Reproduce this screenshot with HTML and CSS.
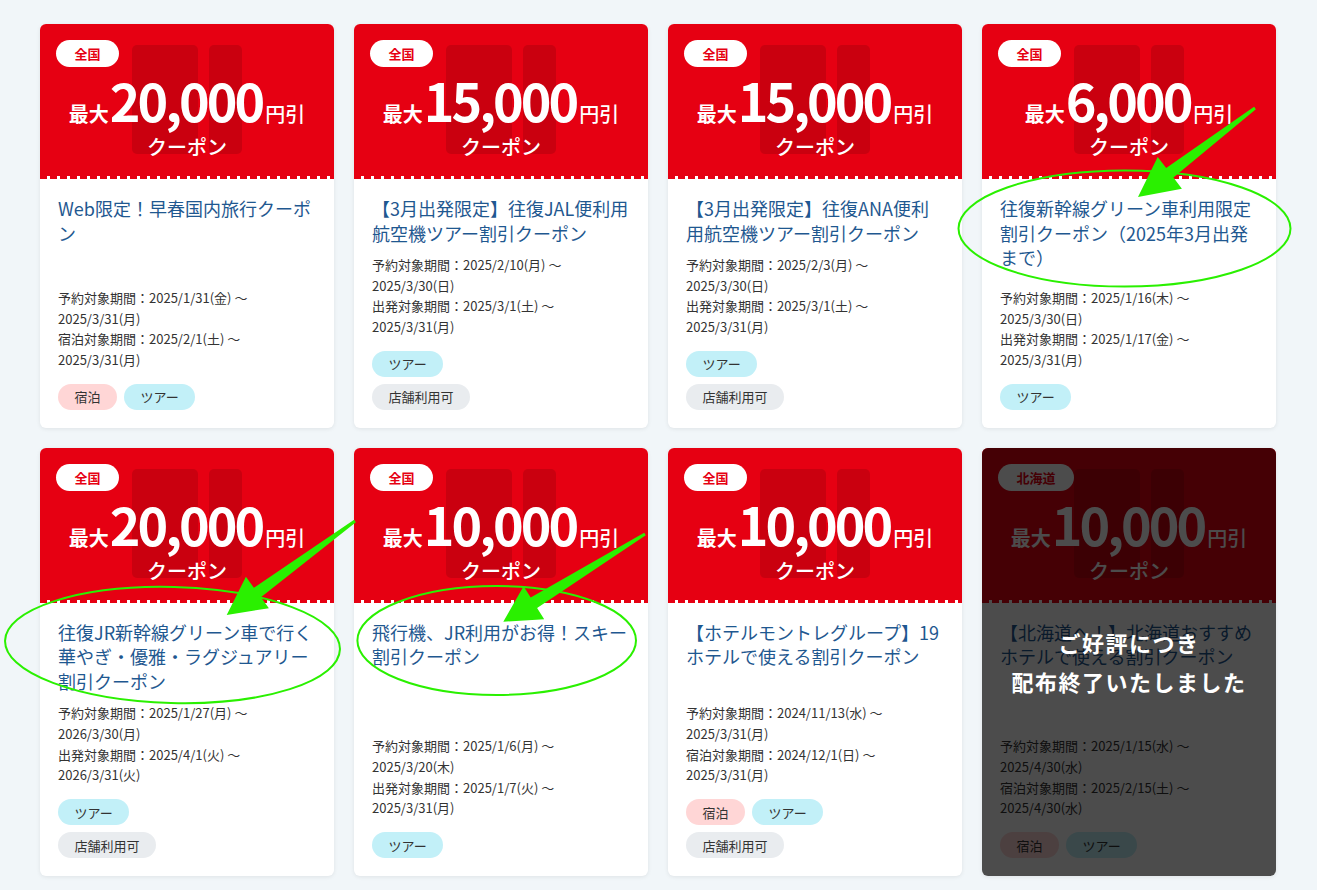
FILE: index.html
```html
<!DOCTYPE html>
<html lang="ja">
<head>
<meta charset="utf-8">
<title>クーポン一覧</title>
<link rel="stylesheet" href="styles.css">
</head>
<body>
<div class="page">
  <div class="grid">

    <div class="card">
      <div class="head">
        <svg class="deco" viewBox="0 0 110 109" width="110" height="109"><rect x="0" y="0" width="66" height="109" rx="5"/><rect x="77" y="0" width="33" height="109" rx="5"/></svg>
        <span class="badge">全国</span>
        <div class="price"><span class="pre">最大</span><span class="num">20,000</span><span class="suf">円引</span></div>
        <div class="kind">クーポン</div>
      </div>
      <div class="body">
        <h2 class="title">Web限定！早春国内旅行クーポン</h2>
        <div class="info">
          <p class="dates">予約対象期間：2025/1/31(金) ～<br>2025/3/31(月)<br>宿泊対象期間：2025/2/1(土) ～<br>2025/3/31(月)</p>
          <div class="tags"><span class="tag stay">宿泊</span><span class="tag tour">ツアー</span></div>
        </div>
      </div>
    </div>

    <div class="card">
      <div class="head">
        <svg class="deco" viewBox="0 0 110 109" width="110" height="109"><rect x="0" y="0" width="66" height="109" rx="5"/><rect x="77" y="0" width="33" height="109" rx="5"/></svg>
        <span class="badge">全国</span>
        <div class="price"><span class="pre">最大</span><span class="num">15,000</span><span class="suf">円引</span></div>
        <div class="kind">クーポン</div>
      </div>
      <div class="body">
        <h2 class="title">【3月出発限定】往復JAL便利用航空機ツアー割引クーポン</h2>
        <div class="info">
          <p class="dates">予約対象期間：2025/2/10(月) ～<br>2025/3/30(日)<br>出発対象期間：2025/3/1(土) ～<br>2025/3/31(月)</p>
          <div class="tags"><span class="tag tour">ツアー</span></div>
          <div class="tags"><span class="tag shop">店舗利用可</span></div>
        </div>
      </div>
    </div>

    <div class="card">
      <div class="head">
        <svg class="deco" viewBox="0 0 110 109" width="110" height="109"><rect x="0" y="0" width="66" height="109" rx="5"/><rect x="77" y="0" width="33" height="109" rx="5"/></svg>
        <span class="badge">全国</span>
        <div class="price"><span class="pre">最大</span><span class="num">15,000</span><span class="suf">円引</span></div>
        <div class="kind">クーポン</div>
      </div>
      <div class="body">
        <h2 class="title">【3月出発限定】往復ANA便利用航空機ツアー割引クーポン</h2>
        <div class="info">
          <p class="dates">予約対象期間：2025/2/3(月) ～<br>2025/3/30(日)<br>出発対象期間：2025/3/1(土) ～<br>2025/3/31(月)</p>
          <div class="tags"><span class="tag tour">ツアー</span></div>
          <div class="tags"><span class="tag shop">店舗利用可</span></div>
        </div>
      </div>
    </div>

    <div class="card">
      <div class="head">
        <svg class="deco" viewBox="0 0 110 109" width="110" height="109"><rect x="0" y="0" width="66" height="109" rx="5"/><rect x="77" y="0" width="33" height="109" rx="5"/></svg>
        <span class="badge">全国</span>
        <div class="price"><span class="pre">最大</span><span class="num">6,000</span><span class="suf">円引</span></div>
        <div class="kind">クーポン</div>
      </div>
      <div class="body">
        <h2 class="title">往復新幹線グリーン車利用限定割引クーポン（2025年3月出発まで）</h2>
        <div class="info">
          <p class="dates">予約対象期間：2025/1/16(木) ～<br>2025/3/30(日)<br>出発対象期間：2025/1/17(金) ～<br>2025/3/31(月)</p>
          <div class="tags"><span class="tag tour">ツアー</span></div>
        </div>
      </div>
    </div>

    <div class="card">
      <div class="head">
        <svg class="deco" viewBox="0 0 110 109" width="110" height="109"><rect x="0" y="0" width="66" height="109" rx="5"/><rect x="77" y="0" width="33" height="109" rx="5"/></svg>
        <span class="badge">全国</span>
        <div class="price"><span class="pre">最大</span><span class="num">20,000</span><span class="suf">円引</span></div>
        <div class="kind">クーポン</div>
      </div>
      <div class="body">
        <h2 class="title">往復JR新幹線グリーン車で行く華やぎ・優雅・ラグジュアリー割引クーポン</h2>
        <div class="info">
          <p class="dates">予約対象期間：2025/1/27(月) ～<br>2026/3/30(月)<br>出発対象期間：2025/4/1(火) ～<br>2026/3/31(火)</p>
          <div class="tags"><span class="tag tour">ツアー</span></div>
          <div class="tags"><span class="tag shop">店舗利用可</span></div>
        </div>
      </div>
    </div>

    <div class="card">
      <div class="head">
        <svg class="deco" viewBox="0 0 110 109" width="110" height="109"><rect x="0" y="0" width="66" height="109" rx="5"/><rect x="77" y="0" width="33" height="109" rx="5"/></svg>
        <span class="badge">全国</span>
        <div class="price"><span class="pre">最大</span><span class="num">10,000</span><span class="suf">円引</span></div>
        <div class="kind">クーポン</div>
      </div>
      <div class="body">
        <h2 class="title">飛行機、JR利用がお得！スキー割引クーポン</h2>
        <div class="info">
          <p class="dates">予約対象期間：2025/1/6(月) ～<br>2025/3/20(木)<br>出発対象期間：2025/1/7(火) ～<br>2025/3/31(月)</p>
          <div class="tags"><span class="tag tour">ツアー</span></div>
        </div>
      </div>
    </div>

    <div class="card">
      <div class="head">
        <svg class="deco" viewBox="0 0 110 109" width="110" height="109"><rect x="0" y="0" width="66" height="109" rx="5"/><rect x="77" y="0" width="33" height="109" rx="5"/></svg>
        <span class="badge">全国</span>
        <div class="price"><span class="pre">最大</span><span class="num">10,000</span><span class="suf">円引</span></div>
        <div class="kind">クーポン</div>
      </div>
      <div class="body">
        <h2 class="title">【ホテルモントレグループ】19ホテルで使える割引クーポン</h2>
        <div class="info">
          <p class="dates">予約対象期間：2024/11/13(水) ～<br>2025/3/31(月)<br>宿泊対象期間：2024/12/1(日) ～<br>2025/3/31(月)</p>
          <div class="tags"><span class="tag stay">宿泊</span><span class="tag tour">ツアー</span></div>
          <div class="tags"><span class="tag shop">店舗利用可</span></div>
        </div>
      </div>
    </div>

    <div class="card">
      <div class="head">
        <svg class="deco" viewBox="0 0 110 109" width="110" height="109"><rect x="0" y="0" width="66" height="109" rx="5"/><rect x="77" y="0" width="33" height="109" rx="5"/></svg>
        <span class="badge">北海道</span>
        <div class="price"><span class="pre">最大</span><span class="num">10,000</span><span class="suf">円引</span></div>
        <div class="kind">クーポン</div>
      </div>
      <div class="body">
        <h2 class="title">【北海道へ！】北海道おすすめホテルで使える割引クーポン</h2>
        <div class="info">
          <p class="dates">予約対象期間：2025/1/15(水) ～<br>2025/4/30(水)<br>宿泊対象期間：2025/2/15(土) ～<br>2025/4/30(水)</p>
          <div class="tags"><span class="tag stay">宿泊</span><span class="tag tour">ツアー</span></div>
        </div>
      </div>
      <div class="ended">ご好評につき<br>配布終了いたしました</div>
    </div>

  </div>
</div>

<svg class="marks" width="1317" height="890" viewBox="0 0 1317 890">
  <g fill="none" stroke="#2af000" stroke-width="2">
    <ellipse cx="1124.5" cy="228.5" rx="166" ry="58"/>
    <ellipse cx="172.5" cy="645" rx="167.5" ry="58" transform="rotate(1.5 172.5 645)"/>
    <ellipse cx="496.7" cy="640.5" rx="139.3" ry="54.5"/>
  </g>
  <g fill="#2af000">
    <polygon points="1255.9,109.2 1173.4,177.6 1181.9,188.7 1138,197 1157.7,156.9 1166.2,168.0 1254.1,106.8"/>
    <polygon points="355.9,522.2 260.9,597.3 268.9,608.2 226.7,615 245.9,576.8 253.9,587.7 354.1,519.8"/>
    <polygon points="645.8,535.3 537.1,607.9 544.2,619.3 503.3,621.7 523.6,586.2 530.7,597.6 644.2,532.7"/>
  </g>
</svg>
</body>
</html>
```
FILE: styles.css
```css
* { box-sizing: border-box; }

html, body {
  margin: 0;
  padding: 0;
}

body {
  background: #f1f6f9;
  font-family: "Noto Sans CJK JP", "Noto Sans", sans-serif;
  color: #333;
  position: relative;
  min-height: 890px;
}

.page {
  padding: 24px 0 0 40px;
}

.grid {
  display: grid;
  grid-template-columns: repeat(4, 294px);
  gap: 20px;
}

.card {
  position: relative;
  display: flex;
  flex-direction: column;
  background: #fff;
  border-radius: 6px;
  overflow: hidden;
  box-shadow: 0 1px 4px rgba(0, 0, 0, 0.08);
}

.head {
  position: relative;
  height: 155px;
  flex: none;
  background: #e60012;
  padding: 16px 16px 0;
  display: flex;
  flex-direction: column;
  align-items: center;
  color: #fff;
}

.head::after {
  content: "";
  position: absolute;
  left: 0;
  right: 0;
  bottom: 0;
  height: 3px;
  background: repeating-linear-gradient(90deg, #e60012 0 7px, #fff 7px 10px);
}

.deco {
  position: absolute;
  left: 92px;
  top: 21px;
  fill: rgba(0, 0, 0, 0.12);
}

.badge {
  position: relative;
  align-self: flex-start;
  height: 27px;
  padding: 0 18.5px;
  border-radius: 14px;
  background: #fff;
  color: #e60012;
  font-size: 13px;
  font-weight: 700;
  display: flex;
  align-items: center;
}

.price {
  position: relative;
  display: flex;
  align-items: baseline;
  justify-content: center;
  margin-top: 7px;
  line-height: 1;
  white-space: nowrap;
}

.pre {
  font-size: 20px;
  font-weight: 700;
}

.num {
  font-size: 52px;
  font-weight: 700;
  letter-spacing: -3px;
  margin: 0 3px 0 1px;
}

.suf {
  font-size: 20px;
  font-weight: 500;
}

.kind {
  position: relative;
  margin-top: 9px;
  font-size: 20px;
  font-weight: 500;
  line-height: 24px;
}

.body {
  flex: 1;
  display: flex;
  flex-direction: column;
  padding: 17px 18px 18px;
}

.title {
  margin: 0 0 10px;
  font-size: 18px;
  line-height: 24.5px;
  font-weight: 400;
  color: #1f5890;
}

.info {
  margin-top: auto;
}

.dates {
  margin: 0;
  font-size: 13px;
  line-height: 20.7px;
  color: #333;
}

.tags {
  display: flex;
  gap: 7px;
  margin-top: 13px;
}

.tags + .tags {
  margin-top: 7px;
}

.tag {
  height: 26px;
  padding: 0 16.5px;
  border-radius: 13px;
  font-size: 13px;
  display: inline-flex;
  align-items: center;
  color: #333;
}

.stay { background: #ffd6d6; }
.tour { background: #c2f0f8; }
.shop { background: #e9ecef; }

.ended {
  position: absolute;
  inset: 0;
  background: rgba(0, 0, 0, 0.7);
  display: flex;
  align-items: center;
  justify-content: center;
  text-align: center;
  color: #fff;
  font-size: 22px;
  font-weight: 700;
  line-height: 39px;
  letter-spacing: 1.5px;
}

.marks {
  position: absolute;
  left: 0;
  top: 0;
  pointer-events: none;
}
```
